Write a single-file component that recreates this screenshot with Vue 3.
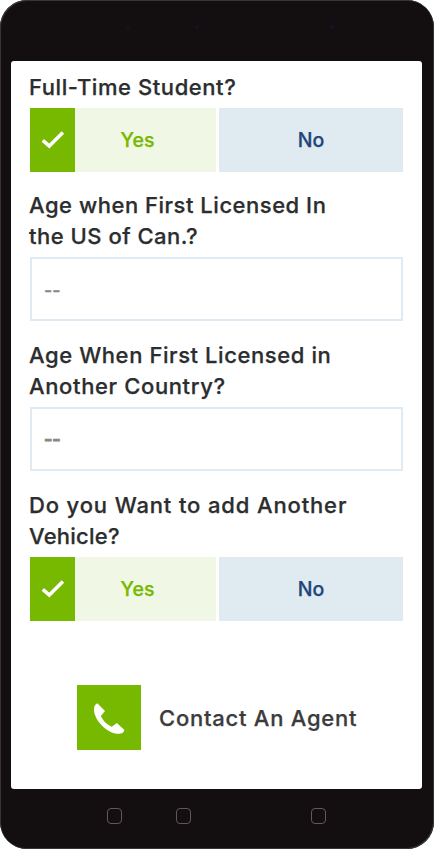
<script setup>
import { reactive } from 'vue'

const questions = reactive([
  { id: 'student', type: 'choice', answer: 'Yes', lines: [{ text: 'Full-Time Student?', cls: 'l1' }] },
  { id: 'age-us', type: 'input', answer: '--', lines: [{ text: 'Age when First Licensed In', cls: 'l2' }, { text: 'the US of Can.?', cls: 'l3' }] },
  { id: 'age-other', type: 'input', strong: true, answer: '--', lines: [{ text: 'Age When First Licensed in', cls: 'l4' }, { text: 'Another Country?', cls: 'l5' }] },
  { id: 'vehicle', type: 'choice', answer: 'Yes', lines: [{ text: 'Do you Want to add Another', cls: 'l6' }, { text: 'Vehicle?', cls: 'l7' }] }
])
</script>

<template>
  <div class="phone">
    <div class="top"><i class="dot d1"></i><i class="dot d2"></i><i class="dot d3"></i></div>
    <main class="screen">
      <section v-for="q in questions" :key="q.id" class="question">
        <div class="label">
          <div v-for="line in q.lines" :key="line.text" class="line"><span :class="line.cls">{{ line.text }}</span></div>
        </div>
        <div v-if="q.type === 'choice'" class="choices">
          <div class="check">
            <svg width="24" height="20" viewBox="0 0 24 20"><path d="M1.8 10.4 L8.3 16.1 L21.9 2.6" fill="none" stroke="#fff" stroke-width="3.5" /></svg>
          </div>
          <div class="yes"><span>Yes</span></div>
          <div class="no"><span>No</span></div>
        </div>
        <div v-else class="field" :class="{ strong: q.strong }"><span>{{ q.answer }}</span></div>
      </section>
      <div class="contact">
        <div class="call">
          <svg width="64" height="65" viewBox="0 0 64 65"><path fill="#fff" d="M20.3 18.2 L28 26 L23.9 31 C25.5 35 30 39.8 34.8 41.7 L39.8 38 L47.2 44.7 C47.5 47.5 44 49.2 39.5 48.7 C27.5 46.5 16.5 33.5 17 24 C17 21.3 18.2 19.3 20.3 18.2 Z" /></svg>
        </div>
        <span class="agent">Contact An Agent</span>
      </div>
    </main>
    <div class="bottom"><i class="key k1"></i><i class="key k2"></i><i class="key k3"></i></div>
  </div>
</template>

<style>
body { background: #fff; }
</style>

<style scoped>
* { box-sizing: border-box; }
.phone {
  width: 434px; height: 849px; padding: 0 12px 0 11px;
  background: #130e10; border-radius: 27px;
  box-shadow: inset 1px 1px 0 #393435, inset -1px -1px 0 #393435;
  font-family: Inter, "Open Sans", "Liberation Sans", sans-serif;
  font-weight: 500; display: flex; flex-direction: column;
}
.top { height: 60.5px; flex: none; display: flex; padding-top: 25px; }
.dot { width: 4px; height: 4px; border-radius: 50%; background: #12122c; }
.d1 { margin-left: 115px; }
.d2 { margin-left: 65px; }
.d3 { margin-left: 131px; }
.screen {
  height: 728.5px; flex: none; background: #fff; border-radius: 3px;
  padding: 11px 19px 0; display: flex; flex-direction: column; gap: 18.7px;
}
.question { flex: none; display: flex; flex-direction: column; gap: 5px; }
.line {
  height: 31px; line-height: 31px; font-size: 22px; color: #2c2d2e;
  white-space: nowrap; margin-left: -1px;
  -webkit-text-stroke: 0.25px #2c2d2e;
}
.l1 { letter-spacing: 0.57px; }
.l2 { letter-spacing: 0.52px; }
.l3 { letter-spacing: 0.5px; }
.l4 { letter-spacing: 0.58px; }
.l5 { letter-spacing: 0.63px; }
.l6 { letter-spacing: 0.86px; }
.l7 { letter-spacing: 0.25px; }
.choices { display: flex; height: 64px; font-size: 19.5px; }
.check { width: 45px; background: #76b900; display: flex; align-items: center; justify-content: center; }
.yes { width: 141px; margin-right: 3px; background: #f0f7e5; color: #76b900; -webkit-text-stroke: 0.25px #76b900; }
.no { width: 184px; background: #dfeaf1; color: #214579; -webkit-text-stroke: 0.25px #214579; }
.yes, .no { display: flex; align-items: center; justify-content: center; }
.yes span { margin-right: 16px; }
.field {
  height: 64px; border: 2px solid #dfeaf2; display: flex; align-items: center;
  padding: 2px 0 0 12px; color: #858780; font-size: 18px; -webkit-text-stroke: 0.3px #858780;
}
.strong { -webkit-text-stroke: 1px #858780; }
.contact { display: flex; align-items: center; margin: 45.4px 0 0 47px; height: 65px; gap: 18px; }
.call { width: 64px; height: 65px; background: #76b900; }
.call svg { display: block; }
.agent { font-size: 22px; color: #3b3b3d; white-space: nowrap; letter-spacing: 0.75px; padding-top: 1px; -webkit-text-stroke: 0.25px #3b3b3d; }
.bottom { display: flex; padding-top: 19px; }
.key { width: 15px; height: 16px; border: 1px solid #65565a; border-radius: 4px; }
.k1 { margin-left: 96px; }
.k2 { margin-left: 54px; }
.k3 { margin-left: 120px; }
</style>
